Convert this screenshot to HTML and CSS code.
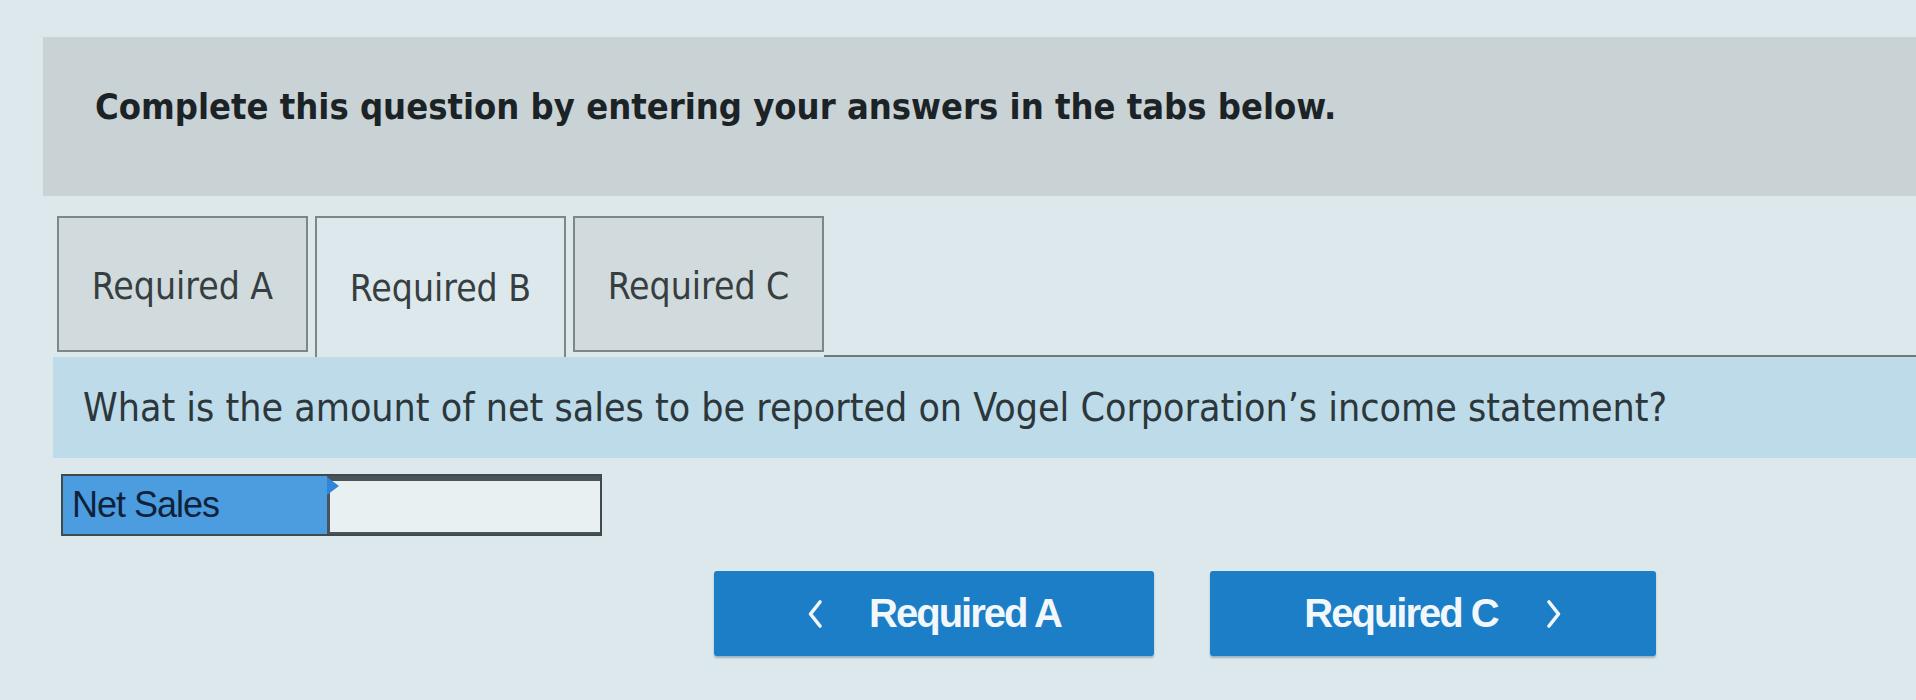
FILE: index.html
```html
<!DOCTYPE html>
<html>
<head>
<meta charset="utf-8">
<link rel="stylesheet" href="styles.css">
</head>
<body>
<div class="page">
  <div class="panel">
    <h1 class="heading">Complete this question by entering your answers in the tabs below.</h1>
  </div>
  <div class="content">
    <div class="tabs">
      <div class="tab">Required A</div>
      <div class="tab active">Required B</div>
      <div class="tab">Required C</div>
      <div class="tab-fill"></div>
    </div>
    <div class="question">What is the amount of net sales to be reported on Vogel Corporation’s income statement?</div>
    <div class="answer-row">
      <div class="answer-label">Net Sales</div>
      <div class="answer-input"><span class="flag"></span></div>
    </div>
    <div class="nav">
      <button class="nav-btn prev">
        <svg class="chev" viewBox="0 0 16 30" width="16" height="30"><path d="M13 3 L3.5 15 L13 27" fill="none" stroke="currentColor" stroke-width="3.6" stroke-linecap="round" stroke-linejoin="round"/></svg>
        <span>Required A</span>
      </button>
      <button class="nav-btn next">
        <span>Required C</span>
        <svg class="chev" viewBox="0 0 16 30" width="16" height="30"><path d="M3 3 L12.5 15 L3 27" fill="none" stroke="currentColor" stroke-width="3.6" stroke-linecap="round" stroke-linejoin="round"/></svg>
      </button>
    </div>
  </div>
</div>
</body>
</html>
```
FILE: styles.css
```css
html, body {
  margin: 0;
  padding: 0;
  background: #dce8eb;
  height: 700px;
  overflow: hidden;
}
.page {
  padding-top: 37px;
}
.panel {
  margin-left: 43px;
  height: 159px;
  box-sizing: border-box;
  background: #c9d2d4;
  display: flex;
  align-items: center;
  padding-left: 52px;
  padding-bottom: 20px;
}
.heading {
  margin: 0;
  font-family: "DejaVu Sans Condensed", "DejaVu Sans", sans-serif;
  font-weight: bold;
  font-size: 36px;
  color: #1c2326;
}
.content {
  margin-left: 53px;
  padding-top: 20px;
}
.tabs {
  display: flex;
  align-items: flex-start;
  height: 141px;
}
.tab {
  box-sizing: border-box;
  width: 251px;
  height: 136px;
  margin-right: 7px;
  border: 2px solid #7d8789;
  background: #d1dadc;
  display: flex;
  align-items: center;
  justify-content: center;
  padding-top: 5px;
  font-family: "DejaVu Sans Condensed", "DejaVu Sans", sans-serif;
  font-size: 37px;
  color: #363e41;
}
.tab:first-child {
  margin-left: 4px;
}
.tab.active {
  height: 141px;
  background: #dce8eb;
  border-bottom: none;
  padding-top: 5px;
  padding-bottom: 3px;
}
.tab-fill {
  flex: 1;
  align-self: flex-end;
  height: 0;
  border-bottom: 2px solid #6f797b;
  margin-left: -7px;
}
.question {
  height: 101px;
  background: #bddbe8;
  display: flex;
  align-items: center;
  padding-left: 30px;
  font-family: "DejaVu Sans Condensed", "DejaVu Sans", sans-serif;
  font-size: 39px;
  color: #2c373b;
}
.answer-row {
  margin-top: 16px;
  margin-left: 8px;
  width: 541px;
  height: 62px;
  box-sizing: border-box;
  border: 2px solid #3f4a50;
  display: flex;
}
.answer-label {
  width: 264px;
  background: #4c9ce0;
  display: flex;
  align-items: center;
  padding-left: 9px;
  box-sizing: border-box;
  font-family: "Liberation Sans", Arial, sans-serif;
  font-size: 36px;
  color: #10223a;
  letter-spacing: -1px;
}
.answer-input {
  flex: 1;
  position: relative;
  background: #e8f0f2;
  border: 3px solid #4a5358;
  border-right: none;
  border-bottom: 2px solid #4a5358;
  border-top: 5px solid #4a5358;
}
.flag {
  position: absolute;
  left: -3px;
  top: -4px;
  width: 0;
  height: 0;
  border-top: 9px solid transparent;
  border-bottom: 9px solid transparent;
  border-left: 12px solid #2f86d8;
}
.nav {
  margin-top: 35px;
  margin-left: 661px;
  display: flex;
  gap: 56px;
}
.nav-btn {
  height: 85px;
  border: none;
  border-radius: 3px;
  background: #1b7ec6;
  box-shadow: 0 2px 2px rgba(40, 80, 110, 0.35);
  color: #f2f7fb;
  font-family: "Liberation Sans", Arial, sans-serif;
  font-weight: bold;
  font-size: 40px;
  letter-spacing: -2px;
  display: flex;
  align-items: center;
  justify-content: center;
  gap: 46px;
  padding: 0;
}
.nav-btn.prev {
  width: 440px;
}
.nav-btn.next {
  width: 446px;
  gap: 48px;
}
.chev {
  display: block;
}
```
